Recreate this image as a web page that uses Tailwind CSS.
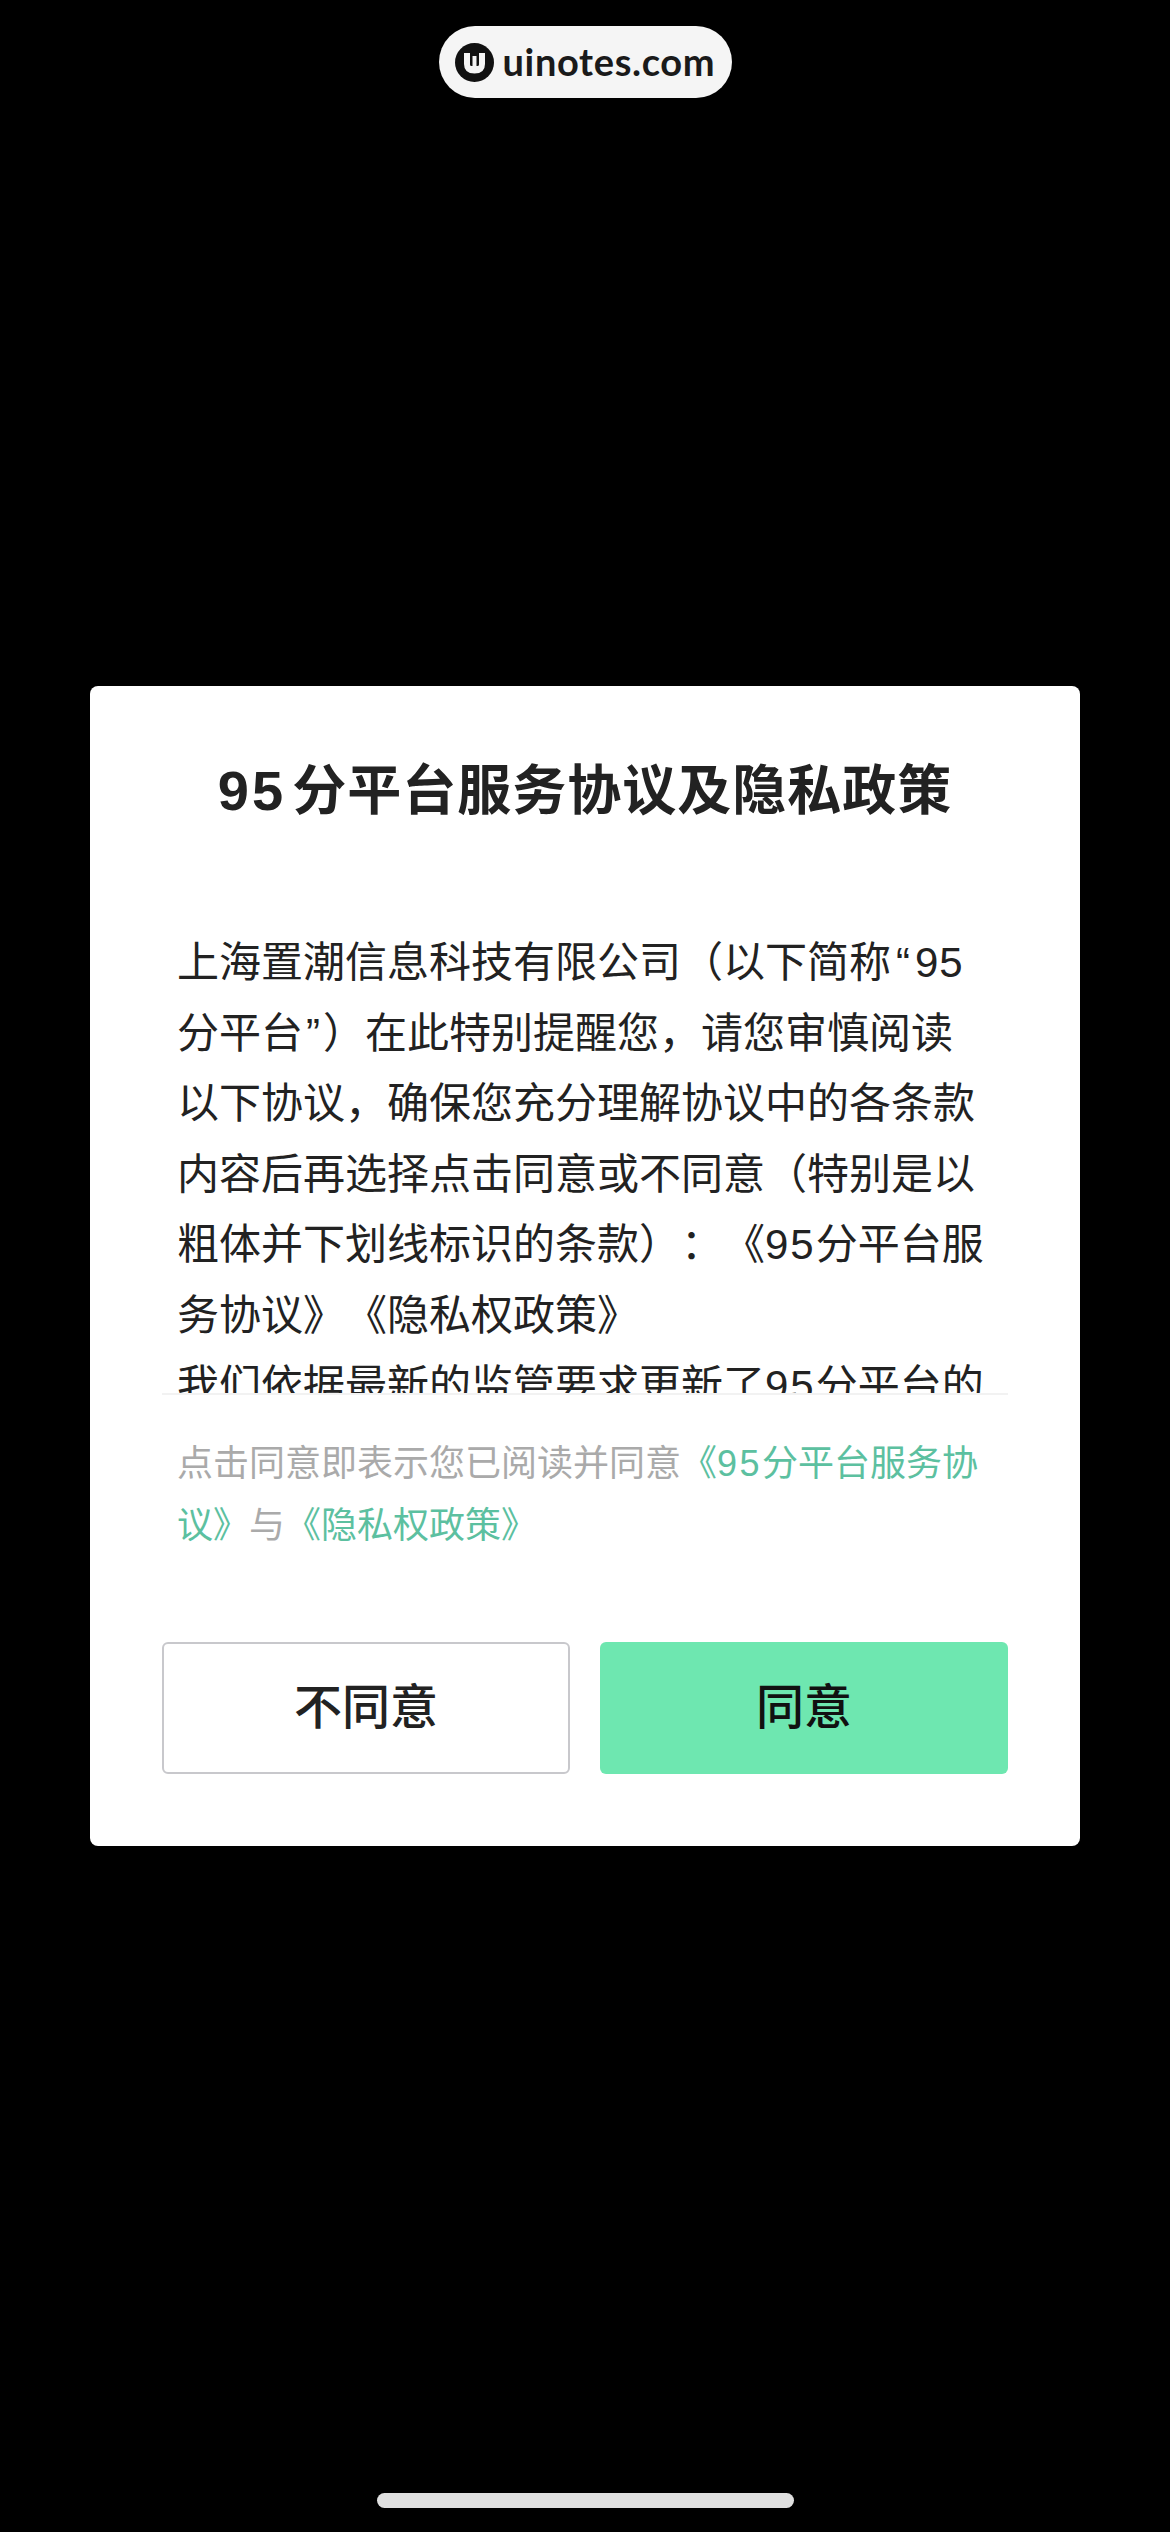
<!DOCTYPE html>
<html lang="zh-CN">
<head>
  <meta charset="UTF-8" />
  <meta name="viewport" content="width=device-width, initial-scale=1.0"/>
  <title>95分平台服务协议及隐私政策</title>
  <script src="https://cdn.jsdelivr.net/npm/@tailwindcss/browser@4"></script>
</head>
<body class="bg-black min-h-screen flex flex-col items-center font-['Liberation_Sans','Noto_Sans_CJK_SC',sans-serif] [text-spacing-trim:space-all]">

  <!-- Watermark pill -->
  <div class="mt-[26px] w-[293px] h-[72px] rounded-full bg-[#f5f5f5] flex items-center pl-[16px] gap-[9px]">
    <svg class="w-[39px] h-[39px] shrink-0" viewBox="0 0 39 39">
      <circle cx="19.5" cy="19.5" r="19.5" fill="#111"/>
      <path d="M9 10h6v11.500q0 1.500 1.500 1.500h1v-10h4v10h1q1.500 0 1.500-1.500v-11.500h6v11q0 9.500-10.500 9.500t-10.500-9.500z" fill="#f5f5f5"/>
    </svg>
    <span class="font-['Lato',sans-serif] font-bold text-[38px] leading-none text-[#1a1a1a] tracking-[0.65px] pb-[3px]">uinotes.com</span>
  </div>

  <!-- Agreement dialog -->
  <div class="mt-[588px] w-[990px] h-[1160px] bg-white rounded-[8px] flex flex-col px-[72px]">
    <h1 class="pt-[70px] h-[140px] text-center text-[54px] leading-[70px] font-bold tracking-[1px] text-[#222]"><span class="text-[56px] tracking-[3px] mr-[6px]">95</span>分平台服务协议及隐私政策</h1>

    <div class="mt-[98px] h-[471px] overflow-hidden border-b-2 border-[#f2f2f2] pl-[15px] pt-[4px] text-[42px] leading-[70.5px] text-[#222] whitespace-nowrap">
      <p>上海置潮信息科技有限公司（以下简称<span class="px-[5px]">“</span><span class="tracking-[1px]">95</span></p>
      <p>分平台<span class="px-[3px]">”</span>）在此特别提醒您，请您审慎阅读</p>
      <p>以下协议，确保您充分理解协议中的各条款</p>
      <p>内容后再选择点击同意或不同意（特别是以</p>
      <p>粗体并下划线标识的条款）：《<span class="tracking-[2px]">95</span>分平台服</p>
      <p>务协议》《隐私权政策》</p>
      <p>我们依据最新的监管要求更新了<span class="tracking-[2px]">95</span>分平台的</p>
    </div>

    <div class="mt-[38px] pl-[15px] text-[36px] leading-[62px] text-[#aaaaaa] whitespace-nowrap">
      <p>点击同意即表示您已阅读并同意<span class="text-[#5cc0a0]">《<span class="tracking-[2.5px]">95</span>分平台服务协</span></p>
      <p><span class="text-[#5cc0a0]">议》</span>与<span class="text-[#5cc0a0]">《隐私权政策》</span></p>
    </div>

    <div class="mt-[85px] flex gap-[30px]">
      <button class="w-[408px] h-[132px] rounded-[6px] border-2 border-[#c8c8cc] bg-white text-[48px] font-medium text-[#222]">不同意</button>
      <button class="w-[408px] h-[132px] rounded-[6px] bg-[#6ee7b0] text-[48px] font-medium text-[#111]">同意</button>
    </div>
  </div>

  <!-- Home indicator -->
  <div class="mt-[647px] w-[417px] h-[15px] rounded-full bg-[#e0e0e0]"></div>
</body>
</html>
